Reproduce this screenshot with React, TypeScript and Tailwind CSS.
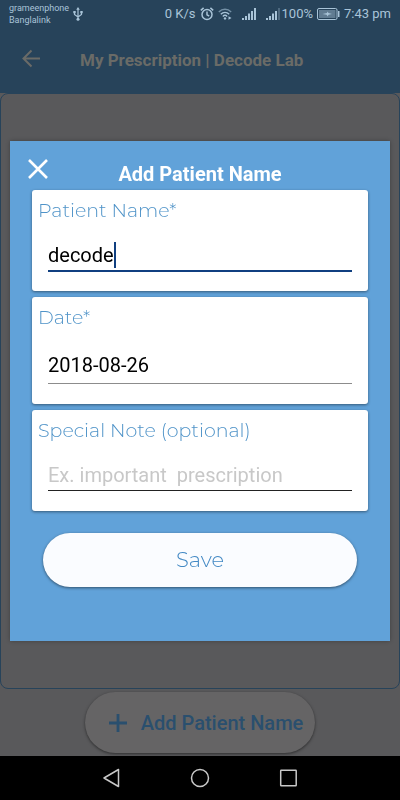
import { useState } from "react";
import type { ReactNode } from "react";

function IconUsb() {
  return (
    <svg viewBox="0 0 10 14" className="h-3.5 w-2.5" fill="none" stroke="currentColor" strokeWidth="1.2">
      <path d="M5 2v10M1.5 5v2.5L5 10M8.5 5v2.5L5 10" />
      <path d="M5 0 3.2 2.8h3.6zM0.3 4h2.4v2.2H0.3zM7.3 4h2.4v2.2H7.3z" fill="currentColor" stroke="none" />
      <circle cx="5" cy="12.3" r="1.5" fill="currentColor" stroke="none" />
    </svg>
  );
}

function IconAlarm() {
  return (
    <svg viewBox="0 0 14 14" className="h-3.5 w-3.5" fill="none" stroke="currentColor" strokeWidth="1.5">
      <circle cx="7" cy="7.5" r="5" />
      <path d="M7 4.6v3.2l2.2 1.2M0.8 3.4 3.6 0.9M13.2 3.4 10.4 0.9" />
    </svg>
  );
}

function IconWifi() {
  return (
    <svg viewBox="0 0 14 12" className="h-3 w-3.5" fill="none" stroke="currentColor" strokeWidth="1.4">
      <path d="M0.8 4C4.4 0.4 9.6 0.4 13.2 4" opacity="0.6" />
      <path d="M2.8 6.2c2.4-2.4 6-2.4 8.4 0M4.8 8.4c1.2-1.2 3.2-1.2 4.4 0" />
      <circle cx="7" cy="10.4" r="1.2" fill="currentColor" stroke="none" />
      <path d="M10.5 8.2v3.6L13.5 10z" fill="currentColor" stroke="none" />
    </svg>
  );
}

function IconSignal({ weak = false }: { weak?: boolean }) {
  return (
    <svg viewBox="0 0 14 12" className="h-3 w-3.5" fill="currentColor">
      <path d="M0 10h2v2H0zM3 8h2v4H3zM6 5.5h2V12H6zM9 3h2v9H9z" />
      <path d="M12 0h2v12h-2z" opacity={weak ? 0.3 : 1} />
    </svg>
  );
}

function IconBattery() {
  return (
    <svg viewBox="0 0 23 12" className="h-3 w-[23px]" fill="none" stroke="currentColor">
      <rect x="0.5" y="0.5" width="19.5" height="11" rx="1.5" />
      <rect x="2" y="2" width="16.5" height="8" fill="currentColor" stroke="none" opacity="0.45" />
      <path d="M21 3h1.5v6H21zM5.5 6l4.5-1 .5-1.6 1 1.6L15 6l-3.5.8-.8 1.8-1-1.8z" fill="currentColor" stroke="none" />
    </svg>
  );
}

function StatusBar() {
  return (
    <div className="flex h-7 items-center justify-between px-[9px] text-[#a9c4d8]">
      <div className="flex items-center gap-1">
        <div className="text-[9px] leading-3">
          <div>grameenphone</div>
          <div>Banglalink</div>
        </div>
        <IconUsb />
      </div>
      <div className="flex items-center text-[13px]">
        <span className="mr-1">0 K/s</span>
        <IconAlarm />
        <span className="ml-1 mr-2.5"><IconWifi /></span>
        <IconSignal />
        <span className="ml-2.5 mr-0.5"><IconSignal weak /></span>
        <span>100%</span>
        <span className="mx-1"><IconBattery /></span>
        <span>7:43 pm</span>
      </div>
    </div>
  );
}

function AppHeader() {
  return (
    <header className="flex h-[65px] items-center gap-9 px-5 text-[#6a6b67]">
      <button type="button" aria-label="Back">
        <svg viewBox="0 0 24 24" className="h-6 w-6" fill="none" stroke="currentColor" strokeWidth="2">
          <path d="M20 9.5H4M11.5 1.5l-8 8 8 8" />
        </svg>
      </button>
      <h1 className="whitespace-nowrap text-[17px] font-bold">My Prescription | Decode Lab</h1>
    </header>
  );
}

type FieldProps = {
  id: string;
  label: string;
  className: string;
  children: ReactNode;
};

function Field({ id, label, className, children }: FieldProps) {
  return (
    <div className={`rounded-[3px] bg-white px-1.5 shadow-[0_1px_3px_rgba(0,0,0,0.45)] ${className}`}>
      <label
        htmlFor={id}
        className="block whitespace-nowrap font-['Montserrat','Open_Sans',sans-serif] text-[19px] font-light leading-[26px] text-[#4f93c8]"
      >
        {label}
      </label>
      {children}
    </div>
  );
}

function AddPatientDialog() {
  const [name, setName] = useState("decode");
  const [date, setDate] = useState("2018-08-26");
  const [note, setNote] = useState("");

  return (
    <div className="fixed inset-x-0 bottom-11 top-[26px] flex items-center px-2.5">
      <form
        role="dialog"
        aria-labelledby="dialog-title"
        onSubmit={(e) => e.preventDefault()}
        className="w-full bg-[#61a2d9] px-[22px] pb-[54px] shadow-[0_0_4px_rgba(0,0,0,0.3)]"
      >
        <div className="grid h-[49px] grid-cols-[32px_1fr_32px] text-white">
          <button type="button" aria-label="Close" className="-ml-1.5 flex items-center pt-1.5">
            <svg viewBox="0 0 24 24" className="h-6 w-6" fill="none" stroke="currentColor" strokeWidth="2.6">
              <path d="m3 3 18 18M21 3 3 21" />
            </svg>
          </button>
          <h2 id="dialog-title" className="self-end pb-0.5 text-center text-[20px] font-bold leading-7">
            Add Patient Name
          </h2>
        </div>

        <div className="flex flex-col gap-1.5">
          <Field id="name" label="Patient Name*" className="pb-[19px] pt-2">
            <div className="relative mx-2.5 mt-4">
              <input
                id="name"
                value={name}
                onChange={(e) => setName(e.target.value)}
                className="block h-8 w-full border-b-2 border-[#103f80] text-[20px] leading-[30px] text-black caret-transparent outline-none"
              />
              {/* text cursor sits right after the typed value */}
              <span
                aria-hidden="true"
                className="pointer-events-none absolute left-0 top-0.5 h-[26px] border-r-2 border-[#103f80] text-[20px]"
              >
                <span className="invisible">{name}</span>
              </span>
            </div>
          </Field>

          <Field id="date" label="Date*" className="pb-5 pt-2">
            <div className="mx-2.5 mt-[18px]">
              <input
                id="date"
                value={date}
                onChange={(e) => setDate(e.target.value)}
                className="block h-[35px] w-full border-b border-[#8c8c8c] pb-0.5 text-[20px] leading-8 text-black outline-none"
              />
            </div>
          </Field>

          <Field id="note" label="Special Note (optional)" className="pb-5 pt-2">
            <div className="mx-2.5 mt-4">
              <input
                id="note"
                value={note}
                placeholder="Ex. important  prescription"
                onChange={(e) => setNote(e.target.value)}
                className="block h-[31px] w-full whitespace-pre border-b border-[#222] text-[20px] leading-[30px] text-black outline-none placeholder:text-[#c8c8c8]"
              />
            </div>
          </Field>
        </div>

        <div className="mt-[22px] px-[11px]">
          <button
            type="submit"
            className="h-[54px] w-full rounded-full bg-[#fafcff] font-['Montserrat','Open_Sans',sans-serif] text-[21px] font-light text-[#4389c4] shadow-[0_1px_3px_rgba(0,0,0,0.5)]"
          >
            Save
          </button>
        </div>
      </form>
    </div>
  );
}

function NavBar() {
  return (
    <nav className="flex h-11 items-center justify-center gap-16 bg-black text-[#c8c8c8]">
      <button type="button" aria-label="Back">
        <svg viewBox="0 0 24 24" className="h-6 w-6" fill="none" stroke="currentColor" strokeWidth="1.5" strokeLinejoin="round">
          <path d="M18.5 3.5v17L4 12z" />
        </svg>
      </button>
      <button type="button" aria-label="Home">
        <svg viewBox="0 0 24 24" className="h-6 w-6" fill="none" stroke="currentColor" strokeWidth="1.5">
          <circle cx="12" cy="12" r="8.5" />
        </svg>
      </button>
      <button type="button" aria-label="Recent apps">
        <svg viewBox="0 0 24 24" className="h-6 w-6" fill="none" stroke="currentColor" strokeWidth="1.5">
          <rect x="4.7" y="4.2" width="15.5" height="15.5" rx="0.5" />
        </svg>
      </button>
    </nav>
  );
}

export default function App() {
  return (
    <div className="flex min-h-screen flex-col bg-[#27435a] font-[Roboto,sans-serif]">
      <StatusBar />
      <AppHeader />
      <main className="flex flex-1 flex-col bg-[#59595b]">
        <div className="min-h-[596px] flex-1 rounded-lg border border-[#27435a]" />
        <div className="flex justify-center py-[3px]">
          <button
            type="button"
            className="flex h-[61px] items-center gap-[11px] rounded-full bg-[#656465] pl-[21px] pr-3 text-[20px] font-medium text-[#2a4f6e] shadow-[0_1px_3px_rgba(0,0,0,0.5)]"
          >
            <svg viewBox="0 0 24 24" className="h-6 w-6" fill="none" stroke="currentColor" strokeWidth="2.8">
              <path d="M12 3v18M3 12h18" />
            </svg>
            Add Patient Name
          </button>
        </div>
      </main>
      <NavBar />
      <AddPatientDialog />
    </div>
  );
}
